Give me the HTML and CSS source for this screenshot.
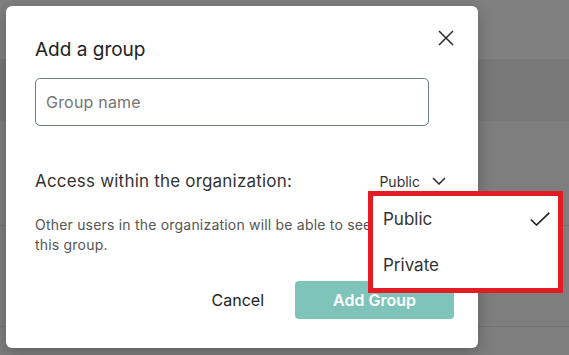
FILE: index.html
```html
<!DOCTYPE html>
<html lang="en">
<head>
    <meta charset="UTF-8">
    <meta name="viewport" content="width=device-width, initial-scale=1.0">
    <title>Add a group</title>
    <link rel="stylesheet" href="styles.css">
</head>
<body>

    <!-- page behind the overlay -->
    <div class="page">
        <div class="page-top"></div>
        <div class="page-header"></div>
        <div class="page-row page-row-first"></div>
        <div class="page-row"></div>
        <div class="page-row page-row-last"></div>
    </div>

    <div class="modal">
        <div class="modal-header">
            <h2 class="modal-title">Add a group</h2>
            <button class="close-btn" aria-label="Close">
                <svg viewBox="0 0 16 16" width="16" height="16">
                    <path d="M1 1 L15 15 M15 1 L1 15" stroke="#2b2b2b" stroke-width="1.5" fill="none"/>
                </svg>
            </button>
        </div>

        <input type="text" class="group-input" placeholder="Group name">

        <div class="access-row">
            <span class="access-label">Access within the organization:</span>
            <button class="access-trigger">
                <span>Public</span>
                <svg viewBox="0 0 14 8" width="14" height="8">
                    <path d="M1 1 L7 7 L13 1" stroke="#2b2b2b" stroke-width="1.5" fill="none"/>
                </svg>
            </button>
        </div>

        <p class="access-desc">Other users in the organization will be able to see this group.</p>

        <div class="modal-actions">
            <button class="cancel-btn">Cancel</button>
            <button class="add-btn" disabled>Add Group</button>
        </div>

        <div class="access-menu">
            <div class="menu-item">
                <span>Public</span>
                <svg viewBox="0 0 20 14" width="20" height="14">
                    <path d="M0.8 7.5 L6.5 13 L19.2 0.8" stroke="#1f1f1f" stroke-width="1.6" fill="none"/>
                </svg>
            </div>
            <div class="menu-item">
                <span>Private</span>
            </div>
        </div>
    </div>

</body>
</html>
```

FILE: styles.css
```css
body {
    margin: 0;
    font-family: 'Inter', 'Liberation Sans', sans-serif;
    background-color: #7e7e7e;
    position: relative;
}
.page-top {
    height: 59px;
    background-color: #808080;
}
.page-header {
    height: 62px;
    background-color: #787878;
}
.page-row {
    height: 101px;
    border-bottom: 1px solid #727272;
    box-sizing: border-box;
}
.page-row-first { height: 105px; }
.page-row-last {
    height: 28px;
    border-bottom: none;
}

.modal {
    position: absolute;
    left: 6px;
    top: 6px;
    width: 472px;
    height: 342px;
    box-sizing: border-box;
    padding: 24px 24px 0 29px;
    background-color: white;
    border-radius: 6px;
    box-shadow: 0 4px 16px rgba(0, 0, 0, 0.25);
}
.modal-header {
    display: flex;
    justify-content: space-between;
    align-items: flex-start;
}
.modal-title {
    margin: 8px 0 0 0;
    font-size: 19px;
    line-height: 24px;
    font-weight: 400;
    color: #222;
}
.close-btn {
    width: 16px;
    height: 16px;
    padding: 0;
    border: none;
    background: none;
    display: flex;
    cursor: pointer;
}
.group-input {
    display: block;
    margin-top: 16px;
    width: 394px;
    height: 48px;
    box-sizing: border-box;
    padding: 0 10px;
    border: 1px solid #6b7c8c;
    border-radius: 5px;
    font-family: inherit;
    font-size: 16px;
    letter-spacing: 0.2px;
    color: #222;
}
.group-input::placeholder { color: #767676; }

.access-row {
    margin-top: 45px;
    height: 20px;
    display: flex;
    justify-content: space-between;
    align-items: center;
}
.access-label {
    font-size: 17px;
    line-height: 20px;
    letter-spacing: 0.2px;
    color: #333;
}
.access-trigger {
    display: flex;
    align-items: center;
    gap: 12px;
    margin-right: 8px;
    padding: 0;
    border: none;
    background: none;
    font-family: inherit;
    font-size: 14px;
    color: #333;
    cursor: pointer;
}
.access-desc {
    margin: 24px 0 0 0;
    width: 355px;
    font-size: 14px;
    line-height: 20px;
    letter-spacing: 0.2px;
    color: #555;
}
.modal-actions {
    margin-top: 26px;
    display: flex;
    justify-content: flex-end;
    align-items: center;
    gap: 16px;
}
.cancel-btn {
    height: 38px;
    padding: 0 15px;
    border: none;
    background: none;
    font-family: inherit;
    font-size: 16px;
    color: #222;
    cursor: pointer;
}
.add-btn {
    width: 159px;
    height: 38px;
    border: none;
    border-radius: 4px;
    background-color: #7fc4ba;
    color: white;
    font-family: inherit;
    font-size: 16px;
    font-weight: 600;
}

/* open dropdown (red outline is part of the capture) */
.access-menu {
    position: absolute;
    left: 362px;
    top: 185px;
    width: 195px;
    height: 102px;
    box-sizing: border-box;
    border: 5px solid #e31b22;
    background-color: white;
}
.menu-item {
    height: 46px;
    padding: 0 8px 0 10px;
    display: flex;
    justify-content: space-between;
    align-items: center;
    font-size: 17px;
    color: #333;
}
```
